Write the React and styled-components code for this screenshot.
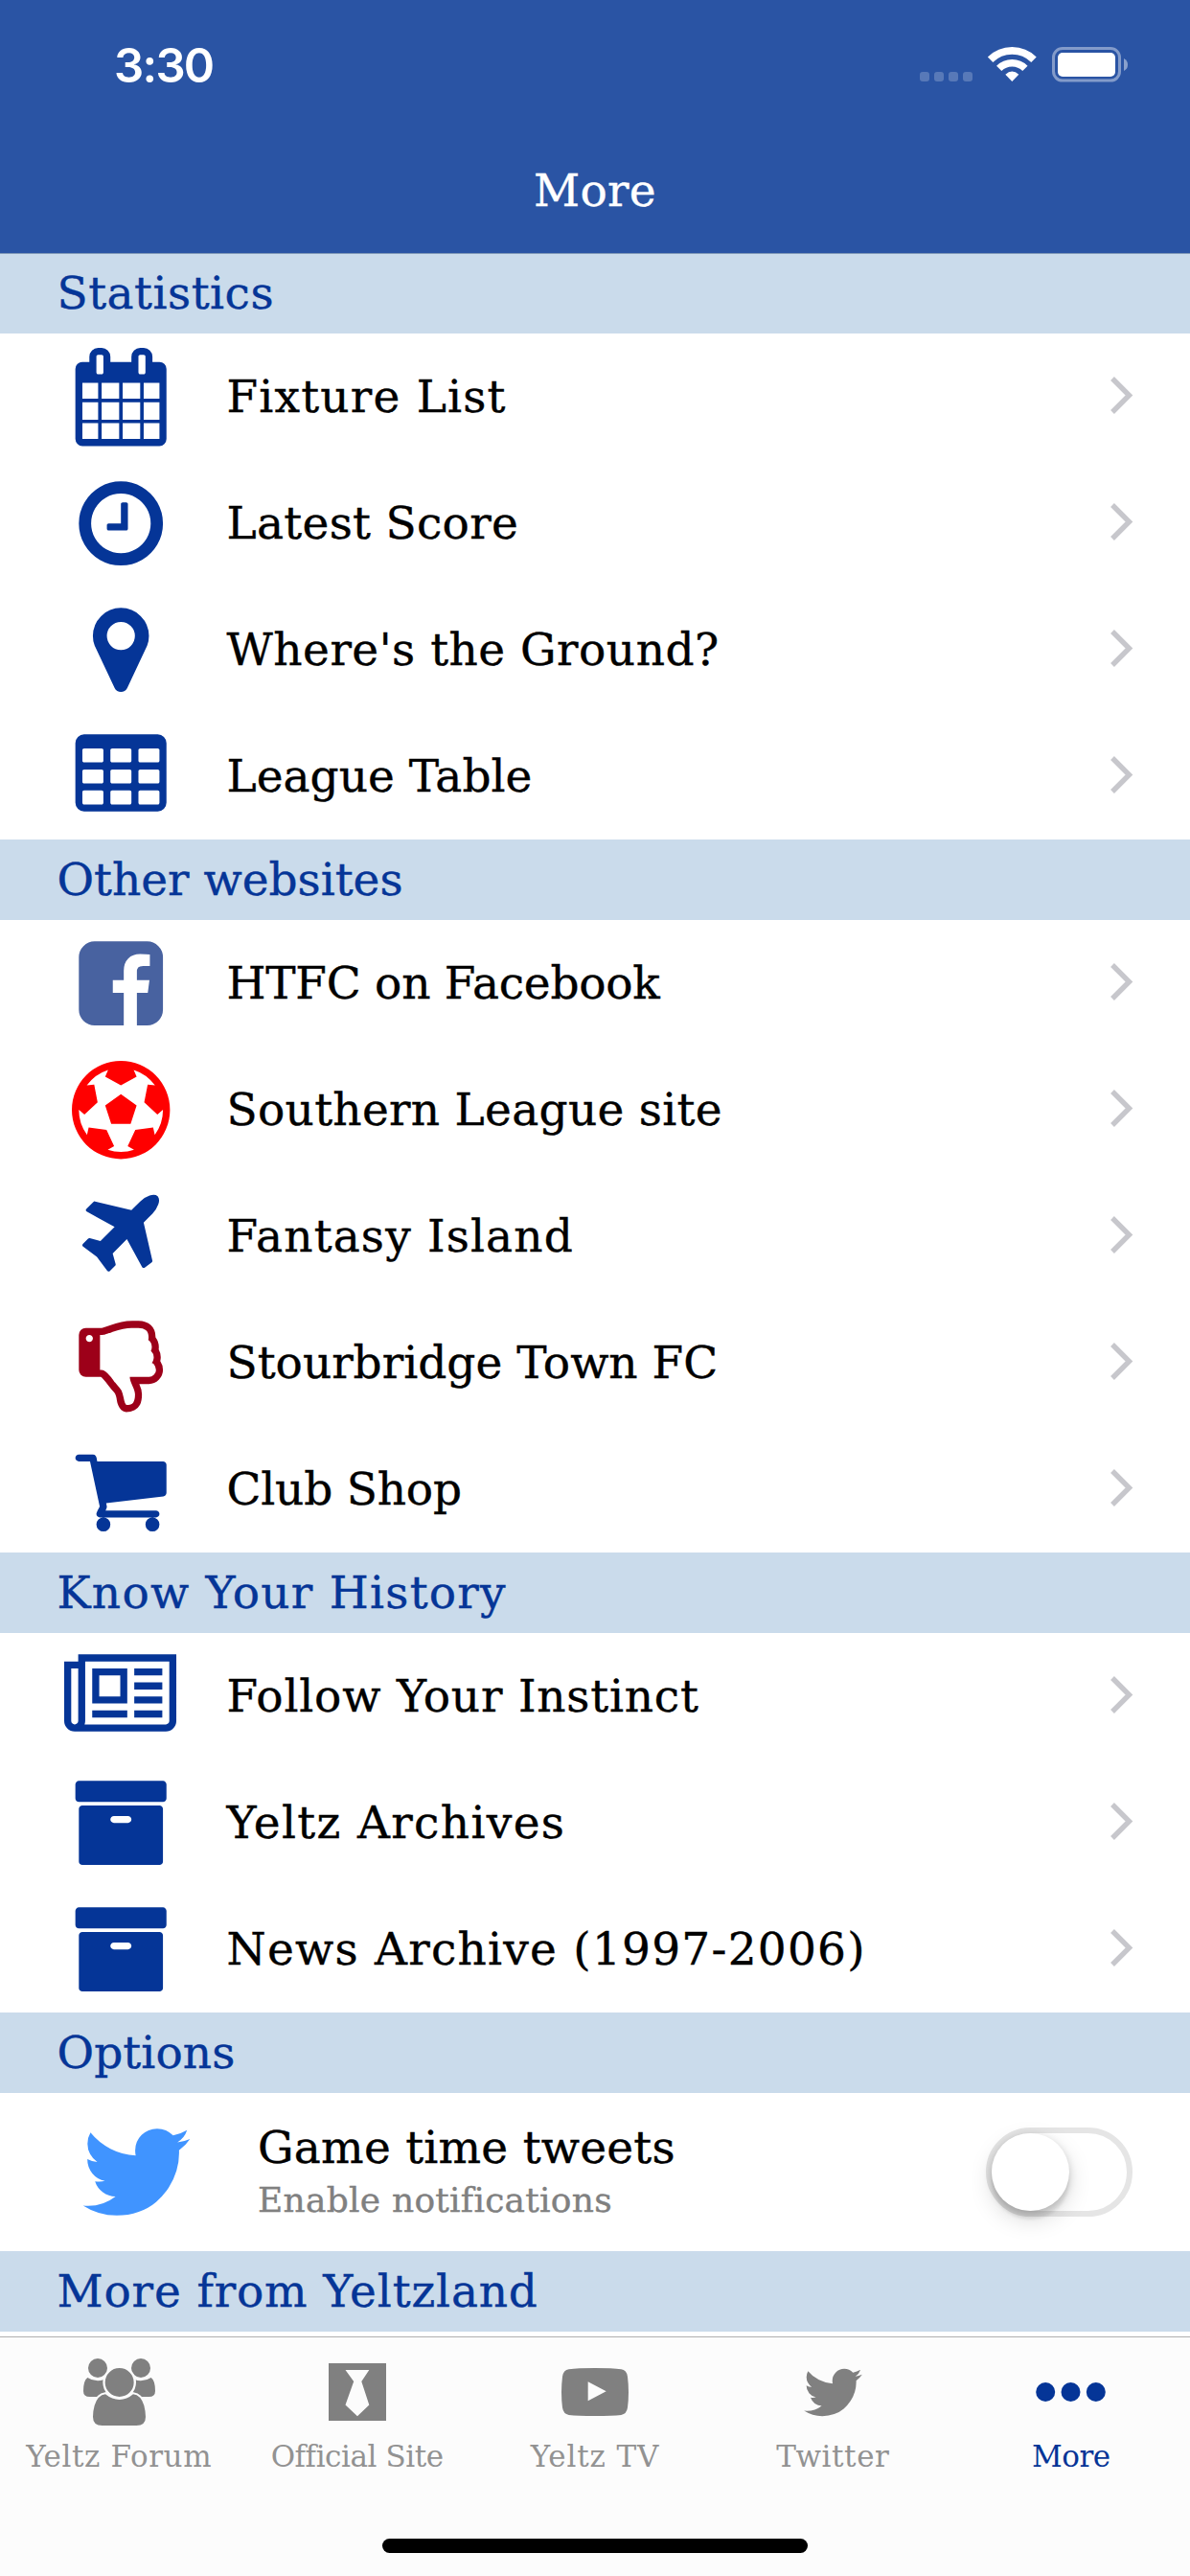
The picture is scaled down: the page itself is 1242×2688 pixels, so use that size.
import React from "react";
import styled, { createGlobalStyle } from "styled-components";

const NAVY = "#053597";
const SERIF = '"DejaVu Serif", "Liberation Serif", serif';

const GlobalStyle = createGlobalStyle`
  * { box-sizing: border-box; }
  body { margin: 0; background: #fff; }
`;

const Screen = styled.div`
  width: 1242px;
  height: 2688px;
  display: flex;
  flex-direction: column;
  overflow: hidden;
  background: #fff;
  font-family: ${SERIF};
  -webkit-text-stroke: 0.4px currentColor;
`;

const Header = styled.header`
  flex: none;
  height: 265px;
  background: #2a54a4;
  border-bottom: 1px solid #7f98b8;
  color: #fff;
`;

const StatusBar = styled.div`
  height: 132px;
  display: flex;
  justify-content: space-between;
  padding: 0 64px 0 119px;
`;

const Clock = styled.time`
  font: 600 49px/60px Inter, "Liberation Sans", sans-serif;
  letter-spacing: -1.7px;
  margin-top: 39px;
  -webkit-text-stroke: 0;
`;

const StatusIcons = styled.div`
  display: flex;
  margin-top: 48px;
`;

const Title = styled.h1`
  margin: 0;
  height: 132px;
  padding-top: 1px;
  text-align: center;
  font: 400 47px/132px ${SERIF};
  letter-spacing: 0.3px;
`;

const List = styled.main`
  flex: 1;
  min-height: 0;
  overflow: hidden;
  margin-top: -1px;
  padding-top: 1px;
`;

const SectionTitle = styled.h2`
  margin: 0;
  height: 84px;
  padding: 0 0 0 59.5px;
  background: #cadbeb;
  color: ${NAVY};
  font: 400 47px/84px ${SERIF};
  letter-spacing: ${(p) => p.$spacing}px;
  white-space: nowrap;

  ${List} > section:first-child > & {
    height: 83px;
    line-height: 82px;
  }
`;

const Row = styled.div`
  height: 132px;
  display: flex;
  align-items: center;
  padding: 0 59px 0 66px;
`;

const RowIcon = styled.div`
  width: 120px;
  display: flex;
  justify-content: center;
  color: ${(p) => p.$color};

  svg { display: block; flex: none; overflow: visible; }
`;

const RowLabel = styled.span`
  flex: 1;
  margin-left: 50.5px;
  color: #000;
  font-size: 47px;
  line-height: 60px;
  letter-spacing: ${(p) => p.$spacing}px;
  white-space: nowrap;
`;

const ChevronIcon = styled.svg`
  width: 24px;
  height: 39px;
  margin-bottom: 3px;
`;

const OptionRow = styled.div`
  height: 165px;
  display: flex;
  align-items: center;
  padding: 0 60px 0 79px;
`;

const OptionIcon = styled.div`
  height: 127px;
  color: #4094ff;
`;

const OptionText = styled.div`
  flex: 1;
  display: flex;
  flex-direction: column;
  gap: 3px;
  margin-left: 63px;
  white-space: nowrap;
`;

const OptionName = styled.span`
  font-size: 47px;
  line-height: 56px;
  letter-spacing: 0.25px;
  color: #000;
`;

const OptionHint = styled.span`
  font-size: 36px;
  line-height: 48px;
  letter-spacing: 0.25px;
  color: #808080;
`;

const Toggle = styled.div`
  width: 153px;
  height: 93px;
  display: flex;
  align-items: center;
  border: 6px solid #e5e5e5;
  border-radius: 47px;
  background: #fff;
`;

const Knob = styled.div`
  width: 81px;
  height: 81px;
  border-radius: 50%;
  background: #fff;
  box-shadow: 0 9px 24px rgba(0, 0, 0, 0.15), 0 9px 3px rgba(0, 0, 0, 0.06),
    0 3px 9px rgba(0, 0, 0, 0.16);
`;

const TabBar = styled.nav`
  flex: none;
  height: 250px;
  display: flex;
  flex-direction: column;
  align-items: center;
  border-top: 1px solid #b0b0b0;
  background: #fcfcfc;
  -webkit-text-stroke: 0;
`;

const Tabs = styled.div`
  width: 100%;
  height: 210px;
  display: grid;
  grid-template-columns: repeat(5, 1fr);
`;

const Tab = styled.div`
  display: flex;
  flex-direction: column;
  align-items: center;
  color: ${(p) => (p.$active ? NAVY : "#808080")};
`;

const TabIcon = styled.div`
  height: 72px;
  margin-top: 21px;
  display: flex;
  align-items: center;

  svg { display: block; }
`;

const TabLabel = styled.span`
  margin-top: 11px;
  font-size: 31px;
  line-height: 40px;
  letter-spacing: ${(p) => p.$spacing}px;
  color: ${(p) => (p.$active ? NAVY : "#929292")};
  white-space: nowrap;
`;

const HomeIndicator = styled.div`
  width: 444px;
  height: 15px;
  border-radius: 8px;
  background: #000;
`;

const PATHS = {
  calendar:
    "M192 1664h288v-288h-288v288zm352 0h320v-288h-320v288zm-352-352h288v-320h-288v320zm352 0h320v-320h-320v320zm-352-384h288v-288h-288v288zm736 736h320v-288h-320v288zm-384-736h320v-288h-320v288zm768 736h288v-288h-288v288zm-384-352h320v-320h-320v320zm-352-864v-288q0-13-9.5-22.5t-22.5-9.5h-64q-13 0-22.5 9.5t-9.5 22.5v288q0 13 9.5 22.5t22.5 9.5h64q13 0 22.5-9.5t9.5-22.5zm736 864h288v-320h-288v320zm-384-384h320v-288h-320v288zm384 0h288v-288h-288v288zm32-480v-288q0-13-9.5-22.5t-22.5-9.5h-64q-13 0-22.5 9.5t-9.5 22.5v288q0 13 9.5 22.5t22.5 9.5h64q13 0 22.5-9.5t9.5-22.5zm384-64v1280q0 52-38 90t-90 38h-1408q-52 0-90-38t-38-90v-1280q0-52 38-90t90-38h128v-96q0-66 47-113t113-47h64q66 0 113 47t47 113v96h384v-96q0-66 47-113t113-47h64q66 0 113 47t47 113v96h128q52 0 90 38t38 90z",
  clock:
    "M1024 544v448q0 14-9 23t-23 9h-320q-14 0-23-9t-9-23v-64q0-14 9-23t23-9h224v-352q0-14 9-23t23-9h64q14 0 23 9t9 23zm416 352q0-148-73-273t-198-198-273-73-273 73-198 198-73 273 73 273 198 198 273 73 273-73 198-198 73-273zm224 0q0 209-103 385.5t-279.5 279.5-385.5 103-385.5-103-279.5-279.5-103-385.5 103-385.5 279.5-279.5 385.5-103 385.5 103 279.5 279.5 103 385.5z",
  marker:
    "M1152 640q0-106-75-181t-181-75-181 75-75 181 75 181 181 75 181-75 75-181zm256 0q0 109-33 179l-364 774q-16 33-47.5 52t-67.5 19-67.5-19-46.5-52l-365-774q-33-70-33-179 0-212 150-362t362-150 362 150 150 362z",
  table:
    "M576 1376v-192q0-14-9-23t-23-9h-320q-14 0-23 9t-9 23v192q0 14 9 23t23 9h320q14 0 23-9t9-23zm0-384v-192q0-14-9-23t-23-9h-320q-14 0-23 9t-9 23v192q0 14 9 23t23 9h320q14 0 23-9t9-23zm512 384v-192q0-14-9-23t-23-9h-320q-14 0-23 9t-9 23v192q0 14 9 23t23 9h320q14 0 23-9t9-23zm-512-768v-192q0-14-9-23t-23-9h-320q-14 0-23 9t-9 23v192q0 14 9 23t23 9h320q14 0 23-9t9-23zm512 384v-192q0-14-9-23t-23-9h-320q-14 0-23 9t-9 23v192q0 14 9 23t23 9h320q14 0 23-9t9-23zm512 384v-192q0-14-9-23t-23-9h-320q-14 0-23 9t-9 23v192q0 14 9 23t23 9h320q14 0 23-9t9-23zm-512-768v-192q0-14-9-23t-23-9h-320q-14 0-23 9t-9 23v192q0 14 9 23t23 9h320q14 0 23-9t9-23zm512 384v-192q0-14-9-23t-23-9h-320q-14 0-23 9t-9 23v192q0 14 9 23t23 9h320q14 0 23-9t9-23zm0-384v-192q0-14-9-23t-23-9h-320q-14 0-23 9t-9 23v192q0 14 9 23t23 9h320q14 0 23-9t9-23zm128-320v1088q0 66-47 113t-113 47h-1344q-66 0-113-47t-47-113v-1088q0-66 47-113t113-47h1344q66 0 113 47t47 113z",
  facebook:
    "M1376 128q119 0 203.5 84.5t84.5 203.5v960q0 119-84.5 203.5t-203.5 84.5h-188v-595h199l30-232h-229v-148q0-56 23.5-84t91.5-28l122-1v-207q-63-9-178-9-136 0-217.5 80t-81.5 226v171h-200v232h200v595h-532q-119 0-203.5-84.5t-84.5-203.5v-960q0-119 84.5-203.5t203.5-84.5h960z",
  football:
    "M609 816l287-208 287 208-109 336h-355zm287-816q182 0 348 71t286 191 191 286 71 348-71 348-191 286-286 191-348 71-348-71-286-191-191-286-71-348 71-348 191-286 286-191 348-71zm619 1350q149-203 149-454v-3l-102 89-240-224 63-323 134 12q-150-206-389-282l53 124-287 159-287-159 53-124q-239 76-389 282l135-12 62 323-240 224-102-89v3q0 251 149 454l30-132 326 40 139 298-116 69q117 39 240 39t240-39l-116-69 139-298 326-40z",
  plane:
    "M1568 160q44 52 12 148t-108 172l-161 161 160 696q5 19-12 33l-128 96q-7 6-19 6-4 0-7-1-15-3-21-16l-279-508-259 259 53 194q5 17-8 31l-96 96q-9 9-23 9h-2q-15-2-24-13l-189-252-252-189q-11-7-13-23-1-13 9-25l96-97q9-9 23-9 6 0 8 1l194 53 259-259-508-279q-14-8-17-24-2-16 9-27l128-128q14-13 30-8l665 159 160-160q76-76 172-108t148 12z",
  thumb:
    "M384 448q0-26-19-45t-45-19-45 19-19 45 19 45 45 19 45-19 19-45zm1152 576q0-35-21.5-81t-53.5-47q15-17 25-47.5t10-55.5q0-69-53-119 18-31 18-69 0-37-17.5-73.5t-47.5-52.5q5-30 5-56 0-85-49-126t-136-41h-128q-131 0-342 73-5 2-29 10.5t-35.5 12.5-35 11.5-38 11-31 6.5-31.5 3h-32v640h32q16 0 35.5 9t40 27 38.5 35.5 40 44 34.5 42.5 31.5 41 23 30q55 68 77 91 41 43 59.5 109.5t30.5 125.5 38 85q96 0 128-47t32-145q0-59-48-160.5t-48-159.5h352q50 0 89-38.5t39-89.5zm128 1q0 103-76 179t-180 76h-176q48 99 48 192 0 118-35 186-35 69-102 101.5t-151 32.5q-51 0-90-37-34-33-54-82t-25.5-90.5-17.5-84.5-31-64q-48-50-107-127-101-131-137-155h-274q-53 0-90.5-37.5t-37.5-90.5v-640q0-53 37.5-90.5t90.5-37.5h288q22 0 138-40 128-44 223-66t200-22h112q140 0 226.5 79t85.5 216v5q60 77 60 178 0 22-3 43 38 67 38 144 0 36-9 69 49 73 49 163z",
  cart:
    "M704 1536q0 52-38 90t-90 38-90-38-38-90 38-90 90-38 90 38 38 90zm896 0q0 52-38 90t-90 38-90-38-38-90 38-90 90-38 90 38 38 90zm128-1088v512q0 24-16.5 42.5t-40.5 21.5l-1044 122q13 60 13 70 0 16-24 64h920q26 0 45 19t19 45-19 45-45 19h-1024q-26 0-45-19t-19-45q0-11 8-31.5t16-36 21.5-40 15.5-29.5l-177-823h-204q-26 0-45-19t-19-45 19-45 45-19h256q16 0 28.5 6.5t19.5 15.5 13 24.5 8 26 5.5 29.5 4.5 26h1201q26 0 45 19t19 45z",
  newspaper:
    "M1024 512h-384v384h384v-384zm128 640v128h-640v-128h640zm0-768v640h-640v-640h640zm640 768v128h-512v-128h512zm0-256v128h-512v-128h512zm0-256v128h-512v-128h512zm0-256v128h-512v-128h512zm-1536 960v-960h-128v960q0 26 19 45t45 19 45-19 19-45zm1664 0v-1088h-1536v1088q0 33-11 64h1483q26 0 45-19t19-45zm128-1216v1216q0 80-56 136t-136 56h-1664q-80 0-136-56t-56-136v-1088h256v-128h1792z",
  archive:
    "M1088 832q0-26-19-45t-45-19h-256q-26 0-45 19t-19 45 19 45 45 19h256q26 0 45-19t19-45zm576-192v960q0 26-19 45t-45 19h-1408q-26 0-45-19t-19-45v-960q0-26 19-45t45-19h1408q26 0 45 19t19 45zm64-448v256q0 26-19 45t-45 19h-1536q-26 0-45-19t-19-45v-256q0-26 19-45t45-19h1536q26 0 45 19t19 45z",
  twitter:
    "M1684 408q-67 98-162 167 1 14 1 42 0 130-38 259.5t-115.5 248.5-184.5 210.5-258 146-323 54.5q-271 0-496-145 35 4 78 4 225 0 401-138-105-2-188-64.5t-114-159.5q33 5 61 5 43 0 85-11-112-23-185.5-111.5t-73.5-205.5v-4q68 38 146 41-66-44-105-115t-39-154q0-88 44-163 121 149 294.5 238.5t371.5 99.5q-8-38-8-74 0-134 94.5-228.5t228.5-94.5q140 0 236 102 109-21 205-78-37 115-142 178 93-10 186-50z",
};

function Glyph({ name, size = 102.4 }) {
  const units = name === "newspaper" ? 2048 : 1792;
  return (
    <svg width={(size * units) / 1792} height={size} viewBox={`0 0 ${units} 1792`} fill="currentColor">
      <path d={PATHS[name]} />
    </svg>
  );
}

function StatusGlyphs() {
  return (
    <svg width="218" height="38" viewBox="960 48 218 38">
      <g fill="#fff" fillOpacity=".22">
        {[960, 975, 990, 1005].map((x) => (
          <rect key={x} x={x} y="75" width="10" height="10" rx="3" />
        ))}
      </g>
      <g fill="none" stroke="#fff">
        <path strokeWidth="7.7" d="M1033.6 62.3a32.15 32.15 0 0 1 45.4 0" />
        <path strokeWidth="7.5" d="M1042.7 71.3a19.3 19.3 0 0 1 27.2 0" />
      </g>
      <path fill="#fff" d="M1056.3 85l-7-7.2q7-6.6 14 0z" />
      <rect x="1099.5" y="50.5" width="69" height="33.6" rx="9.5" fill="none" stroke="#fff" strokeOpacity=".42" strokeWidth="3" />
      <rect x="1104" y="55" width="60" height="25" rx="5" fill="#fff" />
      <path fill="#fff" fillOpacity=".45" d="M1173 61q4 2 4 6.500t-4 6.500z" />
    </svg>
  );
}

function Chevron() {
  return (
    <ChevronIcon viewBox="0 0 24 39" fill="none" stroke="#c7c7cc" strokeWidth="5.4">
      <path d="M2 2L19.500 19.500L2 37" />
    </ChevronIcon>
  );
}

function PeopleIcon() {
  const gap = "#fcfcfc";
  return (
    <svg width="75" height="70" viewBox="48 33 225 210" fill="currentColor">
      <circle cx="93" cy="63" r="30" />
      <circle cx="228" cy="63" r="30" />
      <path d="M61 93Q76 103 93 103Q103 103 112 99L126 153H68Q48 153 48 135Q48 102 61 93Z" />
      <path d="M260 93Q245 103 228 103Q218 103 209 99L195 153H253Q273 153 273 135Q273 102 260 93Z" />
      <path stroke={gap} strokeWidth="13" paintOrder="stroke" d="M117 145Q138 162 161 162Q184 162 204 145Q228 148 238 180Q243 200 243 216Q243 243 214 243H107Q78 243 78 216Q78 197 83 180Q93 148 117 145Z" />
      <circle cx="161" cy="108" r="48.500" stroke={gap} strokeWidth="7" />
    </svg>
  );
}

function TieIcon() {
  return (
    <svg width="60" height="60" viewBox="0 0 60 60">
      <rect width="60" height="60" fill="currentColor" />
      <path fill="#fcfcfc" d="M17.500 7H42.300L34.300 19L42.300 43.500L30 55.300L17.500 43.500L26.200 19Z" />
    </svg>
  );
}

function VideoIcon() {
  return (
    <svg width="70" height="50" viewBox="75 63 210 150" fill="currentColor">
      <path fillRule="evenodd" d="M180 63Q235 63 262 67Q279 69 282 90Q285 115 285 138Q285 165 282 187Q279 207 262 210Q235 213 180 213Q125 213 98 210Q81 207 78 187Q75 165 75 138Q75 115 78 90Q81 69 98 67Q125 63 180 63ZM158 106V166L215 136Z" />
    </svg>
  );
}

function DotsIcon() {
  return (
    <svg width="73" height="20" viewBox="0 0 73 20" fill="currentColor">
      <circle cx="10.200" cy="10" r="10" />
      <circle cx="36.500" cy="10" r="10" />
      <circle cx="62.800" cy="10" r="10" />
    </svg>
  );
}

const SECTIONS = [
  {
    title: "Statistics",
    spacing: 0.5,
    rows: [
      { icon: "calendar", label: "Fixture List", spacing: 1.2 },
      { icon: "clock", label: "Latest Score", spacing: 0.3 },
      { icon: "marker", label: "Where's the Ground?", spacing: 0.5 },
      { icon: "table", label: "League Table", spacing: 0 },
    ],
  },
  {
    title: "Other websites",
    spacing: 0,
    rows: [
      { icon: "facebook", color: "#4862a0", label: "HTFC on Facebook", spacing: -0.25 },
      { icon: "football", color: "#ff0000", label: "Southern League site", spacing: 0.3 },
      { icon: "plane", label: "Fantasy Island", spacing: 1.15 },
      { icon: "thumb", color: "#9d0019", label: "Stourbridge Town FC", spacing: 0 },
      { icon: "cart", label: "Club Shop", spacing: -0.2 },
    ],
  },
  {
    title: "Know Your History",
    spacing: 1.25,
    rows: [
      { icon: "newspaper", label: "Follow Your Instinct", spacing: 0.8 },
      { icon: "archive", label: "Yeltz Archives", spacing: 1.35 },
      { icon: "archive", label: "News Archive (1997-2006)", spacing: 1.25 },
    ],
  },
];

const TABS = [
  { label: "Yeltz Forum", spacing: 0.6, icon: <PeopleIcon /> },
  { label: "Official Site", spacing: -0.45, icon: <TieIcon /> },
  { label: "Yeltz TV", spacing: 0.85, icon: <VideoIcon /> },
  { label: "Twitter", spacing: 0.6, icon: <Glyph name="twitter" size={69} /> },
  { label: "More", spacing: -0.5, icon: <DotsIcon />, active: true },
];

export default function App() {
  return (
    <Screen>
      <GlobalStyle />
      <Header>
        <StatusBar>
          <Clock>3:30</Clock>
          <StatusIcons>
            <StatusGlyphs />
          </StatusIcons>
        </StatusBar>
        <Title>More</Title>
      </Header>
      <List>
        {SECTIONS.map((section) => (
          <section key={section.title}>
            <SectionTitle $spacing={section.spacing}>{section.title}</SectionTitle>
            {section.rows.map((row) => (
              <Row key={row.label}>
                <RowIcon $color={row.color || NAVY}>
                  <Glyph name={row.icon} />
                </RowIcon>
                <RowLabel $spacing={row.spacing}>{row.label}</RowLabel>
                <Chevron />
              </Row>
            ))}
          </section>
        ))}
        <section>
          <SectionTitle $spacing={0.1}>Options</SectionTitle>
          <OptionRow>
            <OptionIcon>
              <Glyph name="twitter" size={127} />
            </OptionIcon>
            <OptionText>
              <OptionName>Game time tweets</OptionName>
              <OptionHint>Enable notifications</OptionHint>
            </OptionText>
            <Toggle>
              <Knob />
            </Toggle>
          </OptionRow>
        </section>
        <section>
          <SectionTitle $spacing={0.85}>More from Yeltzland</SectionTitle>
        </section>
      </List>
      <TabBar>
        <Tabs>
          {TABS.map((tab) => (
            <Tab key={tab.label} $active={tab.active}>
              <TabIcon>{tab.icon}</TabIcon>
              <TabLabel $active={tab.active} $spacing={tab.spacing}>
                {tab.label}
              </TabLabel>
            </Tab>
          ))}
        </Tabs>
        <HomeIndicator />
      </TabBar>
    </Screen>
  );
}
